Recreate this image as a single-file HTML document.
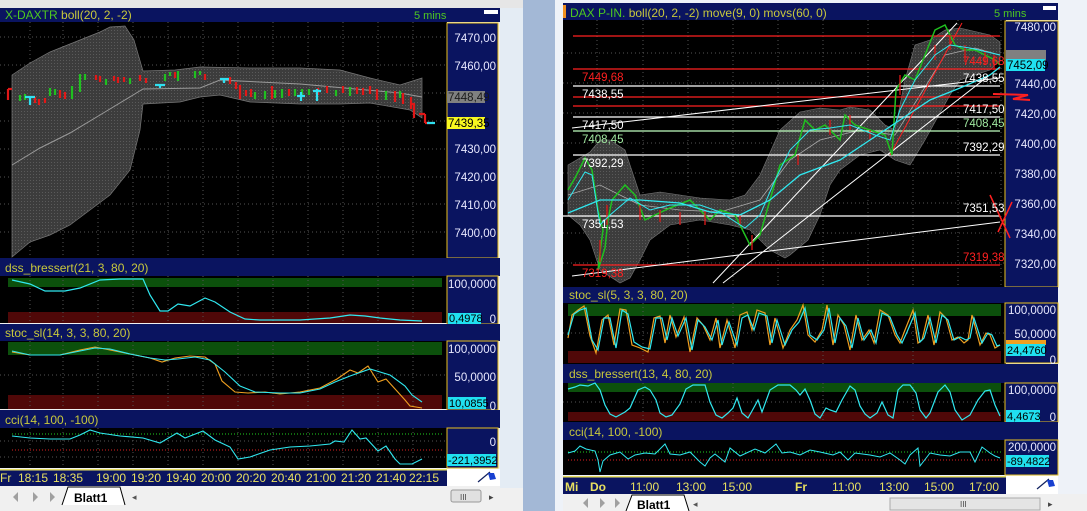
<!DOCTYPE html>
<html><head><meta charset="utf-8"><style>
body{margin:0;width:1087px;height:511px;overflow:hidden;background:#9fb4d2;font-family:"Liberation Sans",sans-serif}
svg{display:block}
text{font-family:"Liberation Sans",sans-serif}
</style></head><body>
<svg width="1087" height="511" viewBox="0 0 1087 511" xmlns="http://www.w3.org/2000/svg">
<defs>
<pattern id="dots" width="3" height="3" patternUnits="userSpaceOnUse"><rect width="3" height="3" fill="#3c3c3c"/><rect width="1" height="1" fill="#5a5a5a"/></pattern>
</defs>
<rect x="0" y="0" width="1087" height="511" fill="#a3b8d6"/>
<!-- LEFT WINDOW -->
<rect x="0" y="0" width="523" height="511" fill="#f0f0f0"/>
<rect x="0" y="0" width="523" height="8" fill="#e6e6e6"/>
<rect x="500" y="8" width="23" height="480" fill="#e4ecf4"/>
<rect x="0" y="8" width="500" height="14" fill="#0a1460"/>
<text x="5" y="19" font-size="12" fill="#4ec820">X-DAXTR <tspan fill="#c8c83c">boll(20, 2, -2)</tspan></text>
<text x="414" y="19" font-size="11" fill="#4ec820">5 mins</text>
<rect x="484" y="10" width="14" height="4" fill="#fff"/>
<rect x="0" y="22" width="447" height="236" fill="#000"/>
<rect x="447" y="23" width="51" height="235" fill="#0a1460" stroke="#e8c020" stroke-width="1"/>
<g stroke="#555" stroke-dasharray="1,3" stroke-width="1">
<path d="M30 22V258M63 22V258M98 22V258M133 22V258M168 22V258M203 22V258M238 22V258M273 22V258M308 22V258M343 22V258M378 22V258M413 22V258"/>
<path d="M0 37H447M0 65H447M0 93H447M0 121H447M0 149H447M0 177H447M0 204H447M0 232H447"/>
</g>
<polygon fill="url(#dots)" stroke="#777" stroke-width="0.7" points="12,75 30,63 50,52 80,40 100,32 110,27 125,26 134,40 143,71 175,70 200,67 250,68 300,68 340,70 370,78 400,85 422,78 422,118 410,110 370,103 340,104 300,104 250,102 220,95 200,97 180,102 143,104 140,130 130,170 110,195 90,210 70,225 50,235 30,242 12,257"/>
<polyline fill="none" stroke="#999" stroke-width="1" points="12,165 40,148 70,133 100,115 143,89 200,88 220,80 300,84 400,93 422,97"/>
<g fill="none" stroke-width="2.2">
<path stroke="#e01818" d="M8 89V100M8 89H12M35 97V103M39 99V105M45 98V103M60 90V98M65 92V99M96 75V80M100 76V82M114 76V81M118 77V83M124 77V82M140 75V81M146 78V83M175 72V78M205 74V80M230 77V84M236 82V89M240 85V99M246 90V96M251 89V97M272 86V99M289 89V96M318 88V95M327 86V93M343 86V93M357 87V94M363 88V95M370 86V94M377 89V100M395 91V102M403 93V104M411 97V109M414 104V118M411 104H415M425 114V123M419 114H425M425 123H430"/>
<path stroke="#20c020" d="M20 95V101M25 94V100M50 88V96M55 89V95M72 86V99M80 74V92M85 74V80M106 79V85M130 78V84M165 74V81M170 72V76M178 71V81M195 71V78M200 71V75M255 92V99M265 91V99M275 90V98M282 89V98M295 89V96M302 89V95M309 89V95M336 90V96M350 87V96M386 91V100M400 91V98"/>
<path stroke="#30e0f0" d="M25 97H35M30 96V105M155 85H165M160 84V88M220 79H229M224 78V83M297 96H305M301 92V101M313 91H321M317 89V101M427 123H435"/>
</g>
<rect x="447" y="91" width="38" height="12" fill="#808080"/>
<text x="448" y="101" font-size="11.5" fill="#1a1a1a">7448,49</text>
<rect x="447" y="117" width="38" height="12" fill="#f8f820"/>
<text x="448" y="127" font-size="11.5" fill="#000">7439,35</text>
<g font-size="11.5" fill="#e8e8ff" text-anchor="end">
<text x="496" y="42">7470,00</text><text x="496" y="70">7460,00</text><text x="496" y="153">7430,00</text><text x="496" y="181">7420,00</text><text x="496" y="209">7410,00</text><text x="496" y="237">7400,00</text>
</g>
<!-- dss left -->
<rect x="0" y="258" width="500" height="18" fill="#0a1460"/>
<text x="5" y="272" font-size="12" fill="#c8c83c">dss_bressert(21, 3, 80, 20)</text>
<rect x="0" y="276" width="447" height="47" fill="#000"/>
<rect x="8" y="278" width="434" height="9" fill="#0c500c"/>
<rect x="8" y="312" width="434" height="11" fill="#500808"/>
<path stroke="#555" stroke-dasharray="1,3" d="M30 276V323M63 276V323M98 276V323M133 276V323M168 276V323M203 276V323M238 276V323M273 276V323M308 276V323M343 276V323M378 276V323M413 276V323"/>
<polyline fill="none" stroke="#30e8f0" stroke-width="1.2" points="12,280 30,284 45,291 65,291 80,288 100,280 120,279 143,279 150,295 160,311 168,311 178,304 190,306 205,298 215,302 230,312 245,319 260,320 300,320 330,318 350,315 365,316 380,318 400,320 422,321"/>
<rect x="447" y="276" width="51" height="48" fill="#0a1460" stroke="#e8c020"/>
<text x="496" y="288" font-size="11.5" fill="#e8e8ff" text-anchor="end">100,0000</text>
<text x="496" y="323" font-size="11.5" fill="#e8e8ff" text-anchor="end">0</text>
<rect x="448" y="313" width="33" height="11" fill="#20e0f0"/>
<text x="449" y="322" font-size="11" fill="#000">0,4978</text>
<!-- stoc left -->
<rect x="0" y="324" width="500" height="17" fill="#0a1460"/>
<text x="5" y="337" font-size="12" fill="#c8c83c">stoc_sl(14, 3, 3, 80, 20)</text>
<rect x="0" y="341" width="447" height="68" fill="#000"/>
<rect x="8" y="342" width="434" height="13" fill="#0c500c"/>
<rect x="8" y="395" width="434" height="14" fill="#500808"/>
<path stroke="#555" stroke-dasharray="1,3" d="M30 341V409M63 341V409M98 341V409M133 341V409M168 341V409M203 341V409M238 341V409M273 341V409M308 341V409M343 341V409M378 341V409M413 341V409M0 375H447"/>
<polyline fill="none" stroke="#f0a020" stroke-width="1.1" points="12,352 30,355 60,355 80,350 95,347 110,350 130,354 150,358 162,362 175,358 190,356 205,357 215,364 222,381 235,392 248,393 265,392 280,394 300,392 320,388 337,379 350,370 358,373 368,366 378,382 386,379 396,390 405,400 410,406 422,408"/>
<polyline fill="none" stroke="#30e8f0" stroke-width="1.1" points="12,351 30,355 60,355 80,351 95,348 110,349 130,354 150,358 165,360 178,359 195,357 210,360 225,372 240,386 255,392 280,393 300,393 320,389 335,382 350,376 370,369 390,375 405,386 412,395 422,402"/>
<rect x="447" y="341" width="51" height="69" fill="#0a1460" stroke="#e8c020"/>
<text x="496" y="353" font-size="11.5" fill="#e8e8ff" text-anchor="end">100,0000</text>
<text x="496" y="381" font-size="11.5" fill="#e8e8ff" text-anchor="end">50,0000</text>
<text x="496" y="410" font-size="11.5" fill="#e8e8ff" text-anchor="end">0</text>
<rect x="448" y="397" width="38" height="12" fill="#20e0f0"/>
<text x="449" y="407" font-size="11" fill="#000">10,0855</text>
<!-- cci left -->
<rect x="0" y="410" width="500" height="18" fill="#0a1460"/>
<text x="5" y="424" font-size="12" fill="#c8c83c">cci(14, 100, -100)</text>
<rect x="0" y="428" width="447" height="40" fill="#000"/>
<path stroke="#555" stroke-dasharray="1,3" d="M30 428V468M63 428V468M98 428V468M133 428V468M168 428V468M203 428V468M238 428V468M273 428V468M308 428V468M343 428V468M378 428V468M413 428V468M0 441H447M0 457H447"/>
<path stroke="#20d020" stroke-dasharray="1,2" d="M12 434H442"/>
<path stroke="#e02020" stroke-dasharray="1,2" d="M12 450H442"/>
<polyline fill="none" stroke="#30e8f0" stroke-width="1.1" points="12,436 30,438 50,439 70,439 80,435 90,430 100,433 120,436 143,438 160,443 177,433 185,438 203,431 215,440 230,447 238,459 250,457 270,450 290,447 310,446 330,444 335,441 344,442 352,430 360,439 366,438 378,451 386,446 395,459 400,464 412,464 422,459"/>
<rect x="447" y="428" width="51" height="40" fill="#0a1460" stroke="#e8c020"/>
<text x="496" y="446" font-size="11.5" fill="#e8e8ff" text-anchor="end">0</text>
<rect x="447" y="454" width="49" height="12" fill="#20e0f0"/>
<text x="448" y="464" font-size="11" fill="#000">-221,3952</text>
<!-- time axis left -->
<rect x="0" y="469" width="447" height="17" fill="#0a1460"/>
<rect x="0" y="469" width="447" height="1.5" fill="#e8e060"/>
<g font-size="12" fill="#e8e060">
<text x="0" y="482">Fr</text><text x="18" y="482">18:15</text><text x="53" y="482">18:35</text><text x="96" y="482">19:00</text><text x="131" y="482">19:20</text><text x="166" y="482">19:40</text><text x="201" y="482">20:00</text><text x="236" y="482">20:20</text><text x="271" y="482">20:40</text><text x="306" y="482">21:00</text><text x="341" y="482">21:20</text><text x="376" y="482">21:40</text><text x="409" y="482">22:15</text>
</g>
<rect x="447" y="469" width="53" height="17" fill="#fff"/>
<path d="M478 482L490 472" stroke="#102060" stroke-width="1.2"/>
<path d="M488 473L494 473L496 479L490 480Z" fill="#1840d0"/>
<!-- tabs left -->
<rect x="0" y="486" width="500" height="20" fill="#f0f0f0"/>
<g fill="#a0a0a0"><path d="M6 492V502M18 492L13 497L18 502ZM33 492L38 497L33 502ZM50 492L55 497L50 502ZM56 492V502"/></g>
<path d="M62 505L68 487H120L125 505" fill="#fff" stroke="#000"/>
<text x="74" y="502" font-size="12" font-weight="bold" fill="#000">Blatt1</text>
<text x="132" y="500" font-size="9" fill="#555">◂</text>
<rect x="451" y="490" width="30" height="12" rx="2" fill="#e0e0e0" stroke="#999"/>
<text x="460" y="500" font-size="8" fill="#444">III</text>
<text x="489" y="500" font-size="9" fill="#444">▸</text>

<!-- RIGHT WINDOW -->
<rect x="555" y="0" width="532" height="511" fill="#eef2f8"/>
<rect x="563" y="3" width="495" height="17" fill="#0a1460"/>
<rect x="563" y="5" width="3" height="13" fill="#f09020"/>
<text x="570" y="17" font-size="12" fill="#4ec820">DAX P-IN. <tspan fill="#c8c83c">boll(20, 2, -2) move(9, 0) movs(60, 0)</tspan></text>
<text x="994" y="17" font-size="11" fill="#4ec820">5 mins</text>
<rect x="1043" y="6" width="13" height="4" fill="#fff"/>
<rect x="563" y="20" width="443" height="267" fill="#000"/>
<rect x="1005" y="21" width="53" height="266" fill="#0a1460" stroke="#e8c020"/>
<g stroke="#555" stroke-dasharray="1,3">
<path d="M597 20V287M643 20V287M688 20V287M733 20V287M778 20V287M823 20V287M868 20V287M913 20V287M958 20V287M1001 20V287"/>
<path d="M563 53H1005M563 83H1005M563 113H1005M563 143H1005M563 173H1005M563 203H1005M563 233H1005M563 263H1005"/>
</g>
<polygon fill="url(#dots)" stroke="#777" stroke-width="0.6" points="568,165 580,158 590,152 600,140 610,140 625,150 635,180 640,195 660,192 700,198 730,200 745,195 760,175 780,130 800,112 820,108 840,110 850,107 870,110 885,125 895,130 905,80 915,45 930,40 945,30 960,28 990,35 1000,42 1000,60 990,70 960,80 950,95 925,140 910,165 895,160 880,150 860,155 840,170 830,185 820,215 808,240 790,255 785,258 770,250 750,230 730,225 700,220 670,225 650,240 640,260 630,278 620,283 600,270 590,240 580,225 568,215"/>
<polyline fill="none" stroke="#aaa" stroke-width="0.8" points="568,195 600,185 640,205 680,210 720,212 760,200 790,160 820,140 860,130 895,135 920,95 945,55 975,48 1000,55"/>
<g stroke-width="1.2">
<path stroke="#ff2020" d="M573 36H1000M573 69H1000M573 97H1000M573 106H1000M573 265H1000"/>
<path stroke="#fff" d="M573 86H1000M573 117H1000M573 155H1000M563 216H1000"/>
<path stroke="#c0ffc0" d="M573 131H1000"/>
<path stroke="#fff" stroke-width="1" d="M713 283L957 23M723 283L1000 67M572 128L1000 78M572 276L1000 222"/>
<path stroke="#ff2020" stroke-width="1" d="M890 155L962 23"/>
</g>
<polyline fill="none" stroke="#20c020" stroke-width="1.5" points="568,190 575,178 585,158 592,170 598,210 603,230 600,252 598,270 605,248 608,220 612,200 625,185 635,195 645,220 655,215 670,208 690,200 700,210 710,220 720,210 735,215 750,245 760,235 770,200 780,165 795,155 805,120 815,130 825,125 840,140 845,115 855,125 870,130 885,135 892,155 896,90 905,75 915,80 925,55 935,30 945,25 955,45 965,50 975,50 985,55 995,60 1000,65"/>
<g stroke="#e01818" stroke-width="1.3" fill="none"><path d="M600 240V262M607 205V225M640 205V220M660 210V222M680 212V225M705 210V225M740 215V225M752 235V250M798 155V165M830 120V135M850 115V130M870 130V140M900 75V95M935 45V60M950 35V50M965 45V62M985 50V65M994 55V70"/></g>
<polyline fill="none" stroke="#30e8f0" stroke-width="1.3" points="568,213 600,200 640,200 680,203 710,212 740,215 770,200 800,175 840,160 870,140 900,120 930,100 960,88 990,75 1000,67"/>
<polyline fill="none" stroke="#30e8f0" stroke-width="1" points="568,200 585,172 592,175 600,225 610,215 630,198 650,210 670,205 700,205 720,212 745,228 760,215 775,180 790,150 810,130 830,128 850,125 875,135 890,140 900,110 915,80 935,55 950,45 970,48 1000,55"/>
<path d="M990 195L1010 238M1012 202L998 232" stroke="#ff2020" stroke-width="1.5"/>
<path d="M993 94L1028 95L1013 99L1030 100" stroke="#ff2020" stroke-width="2" fill="none"/>
<g font-size="11.5">
<text x="582" y="81" fill="#ff2020">7449,68</text><text x="582" y="98" fill="#fff">7438,55</text><text x="582" y="129" fill="#fff">7417,50</text><text x="582" y="143" fill="#a0e8a0">7408,45</text><text x="582" y="167" fill="#fff">7392,29</text><text x="582" y="228" fill="#fff">7351,53</text><text x="582" y="277" fill="#ff2020">7319,38</text>
<text x="963" y="82" fill="#fff">7438,55</text><text x="963" y="113" fill="#fff">7417,50</text><text x="963" y="127" fill="#a0e8a0">7408,45</text><text x="963" y="151" fill="#fff">7392,29</text><text x="963" y="212" fill="#fff">7351,53</text><text x="963" y="261" fill="#ff2020">7319,38</text><text x="963" y="65" fill="#ff2020">7449,68</text>
</g>
<g font-size="11.5" fill="#e8e8ff" text-anchor="end">
<text x="1056" y="31">7480,00</text><text x="1056" y="88">7440,00</text><text x="1056" y="118">7420,00</text><text x="1056" y="148">7400,00</text><text x="1056" y="178">7380,00</text><text x="1056" y="208">7360,00</text><text x="1056" y="238">7340,00</text><text x="1056" y="268">7320,00</text>
</g>
<rect x="1006" y="50" width="40" height="11" fill="#808080"/>
<rect x="1006" y="59" width="39" height="12" fill="#20e0f0"/>
<text x="1007" y="69" font-size="11.5" fill="#000">7452,09</text>
<!-- stoc right -->
<rect x="563" y="287" width="495" height="16" fill="#0a1460"/>
<text x="569" y="299" font-size="12" fill="#c8c83c">stoc_sl(5, 3, 3, 80, 20)</text>
<rect x="563" y="303" width="443" height="61" fill="#000"/>
<rect x="568" y="304" width="433" height="12" fill="#0c500c"/>
<rect x="568" y="351" width="433" height="12" fill="#500808"/>
<path stroke="#555" stroke-dasharray="1,3" d="M563 333H1005M643 303V364M733 303V364M823 303V364M913 303V364"/>
<polyline fill="none" stroke="#f0a020" stroke-width="1.2" points="568,338 572,315 578,310 584,306 590,336 596,353 602,320 608,315 614,345 620,309 626,310 632,345 640,348 648,352 654,318 660,316 665,343 670,315 676,337 684,317 690,352 697,318 703,325 710,340 716,318 720,348 727,320 735,348 740,315 747,312 752,330 757,310 765,313 770,345 775,318 783,348 790,330 797,320 803,305 808,335 815,342 822,330 827,305 833,345 838,315 844,325 850,350 856,315 862,340 869,330 874,343 880,310 888,315 895,335 900,343 905,330 913,310 918,343 922,340 928,315 934,345 940,312 946,318 952,340 958,337 964,343 968,340 972,315 980,345 986,333 990,335 995,348 1000,345"/>
<polyline fill="none" stroke="#30e8f0" stroke-width="1.2" points="568,335 574,314 580,310 586,308 592,340 598,350 604,318 610,318 616,348 622,310 628,314 634,342 642,347 650,349 656,318 662,318 667,340 672,318 678,336 686,318 692,350 698,320 705,327 712,340 718,320 722,345 729,322 737,345 742,318 748,315 754,330 759,313 767,316 772,343 777,320 785,345 792,330 799,322 805,308 810,335 817,340 824,330 829,308 835,343 840,318 846,326 852,348 858,318 864,340 871,330 876,343 882,313 890,317 897,335 902,343 907,332 915,313 920,342 924,338 930,318 936,343 942,315 948,320 954,340 960,337 966,340 970,338 974,318 982,343 988,333 992,335 997,346 1000,345"/>
<rect x="1005" y="303" width="53" height="60" fill="#0a1460" stroke="#e8c020"/>
<text x="1056" y="314" font-size="11.5" fill="#e8e8ff" text-anchor="end">100,0000</text>
<text x="1056" y="338" font-size="11.5" fill="#e8e8ff" text-anchor="end">50,0000</text>
<text x="1056" y="364" font-size="11.5" fill="#e8e8ff" text-anchor="end">0</text>
<rect x="1006" y="340" width="40" height="5" fill="#f0a020"/>
<rect x="1006" y="344" width="39" height="12" fill="#20e0f0"/>
<text x="1007" y="354" font-size="11" fill="#000">24,4760</text>
<!-- dss right -->
<rect x="563" y="364" width="495" height="19" fill="#0a1460"/>
<text x="569" y="378" font-size="12" fill="#c8c83c">dss_bressert(13, 4, 80, 20)</text>
<rect x="563" y="383" width="443" height="39" fill="#000"/>
<rect x="568" y="383" width="433" height="9" fill="#0c500c"/>
<rect x="568" y="412" width="433" height="9" fill="#500808"/>
<path stroke="#555" stroke-dasharray="1,3" d="M563 402H1005M643 383V422M733 383V422M823 383V422M913 383V422"/>
<polyline fill="none" stroke="#30e8f0" stroke-width="1.2" points="568,389 575,387 580,385 588,386 595,383 600,390 605,405 610,414 616,417 625,412 630,408 638,390 645,387 650,390 656,400 660,413 666,417 672,415 680,404 686,389 693,385 700,385 705,385 710,402 716,415 722,418 728,413 733,408 737,398 742,413 748,418 752,411 758,400 762,412 770,390 778,385 790,385 796,390 800,395 805,389 810,400 815,414 820,418 826,408 830,410 836,412 842,400 850,386 855,390 860,406 865,414 870,418 877,413 882,402 888,415 893,418 898,390 903,385 910,385 916,393 920,410 926,418 930,413 938,392 945,385 950,392 955,410 962,420 970,415 978,400 985,391 990,390 995,405 1000,416"/>
<rect x="1005" y="383" width="53" height="39" fill="#0a1460" stroke="#e8c020"/>
<text x="1056" y="394" font-size="11.5" fill="#e8e8ff" text-anchor="end">100,0000</text>
<text x="1056" y="421" font-size="11.5" fill="#e8e8ff" text-anchor="end">0</text>
<rect x="1006" y="410" width="34" height="12" fill="#20e0f0"/>
<text x="1007" y="420" font-size="11" fill="#000">4,4673</text>
<!-- cci right -->
<rect x="563" y="422" width="495" height="18" fill="#0a1460"/>
<text x="569" y="436" font-size="12" fill="#c8c83c">cci(14, 100, -100)</text>
<rect x="563" y="440" width="443" height="35" fill="#000"/>
<path stroke="#20d020" stroke-dasharray="1,2" d="M568 452H1001"/>
<path stroke="#e02020" stroke-dasharray="1,2" d="M568 460H1001"/>
<polyline fill="none" stroke="#30e8f0" stroke-width="1" points="568,453 575,451 580,446 586,449 595,451 598,460 600,472 603,461 610,455 620,452 628,459 635,455 645,453 655,454 665,444 670,454 680,455 690,452 700,462 705,466 710,458 715,454 725,462 730,448 740,456 755,449 765,453 776,444 782,453 790,452 800,455 810,450 820,452 833,455 840,452 848,460 855,453 870,455 880,457 890,453 900,460 905,464 910,455 918,448 920,466 930,453 940,455 950,456 960,452 970,452 975,462 982,447 990,453 995,456 1000,458"/>
<rect x="1005" y="440" width="53" height="35" fill="#0a1460" stroke="#e8c020"/>
<text x="1056" y="451" font-size="11.5" fill="#e8e8ff" text-anchor="end">200,0000</text>
<rect x="1006" y="455" width="43" height="12" fill="#20e0f0"/>
<text x="1007" y="465" font-size="11" fill="#000">-89,4822</text>
<!-- time axis right -->
<rect x="563" y="476" width="443" height="18" fill="#0a1460"/>
<rect x="563" y="476" width="443" height="1.5" fill="#e8e060"/>
<g font-size="12" fill="#e8e060">
<text x="565" y="491" font-weight="bold">Mi</text><text x="590" y="491" font-weight="bold">Do</text>
<text x="630" y="491">11:00</text><text x="676" y="491">13:00</text><text x="722" y="491">15:00</text>
<text x="795" y="491" font-weight="bold">Fr</text>
<text x="832" y="491">11:00</text><text x="879" y="491">13:00</text><text x="924" y="491">15:00</text><text x="969" y="491">17:00</text>
</g>
<rect x="1006" y="476" width="52" height="18" fill="#fff"/>
<path d="M1037 489L1049 479" stroke="#102060" stroke-width="1.2"/>
<path d="M1047 480L1053 480L1055 486L1049 487Z" fill="#1840d0"/>
<!-- tabs right -->
<rect x="563" y="494" width="524" height="17" fill="#f0f0f0"/>
<g fill="#a0a0a0"><path d="M569 498V508M588 498L583 503L588 508ZM600 498L605 503L600 508ZM615 498L620 503L615 508ZM621 498V508"/></g>
<path d="M626 511L632 495H684L689 511" fill="#fff" stroke="#000"/>
<text x="637" y="509" font-size="12" font-weight="bold" fill="#000">Blatt1</text>
<text x="693" y="507" font-size="9" fill="#555">◂</text>
<rect x="890" y="498" width="150" height="12" fill="#e4e4e4" stroke="#aaa"/>
<text x="960" y="507" font-size="8" fill="#444">III</text>
<text x="1048" y="507" font-size="9" fill="#444">▸</text>
</svg>
</body></html>
